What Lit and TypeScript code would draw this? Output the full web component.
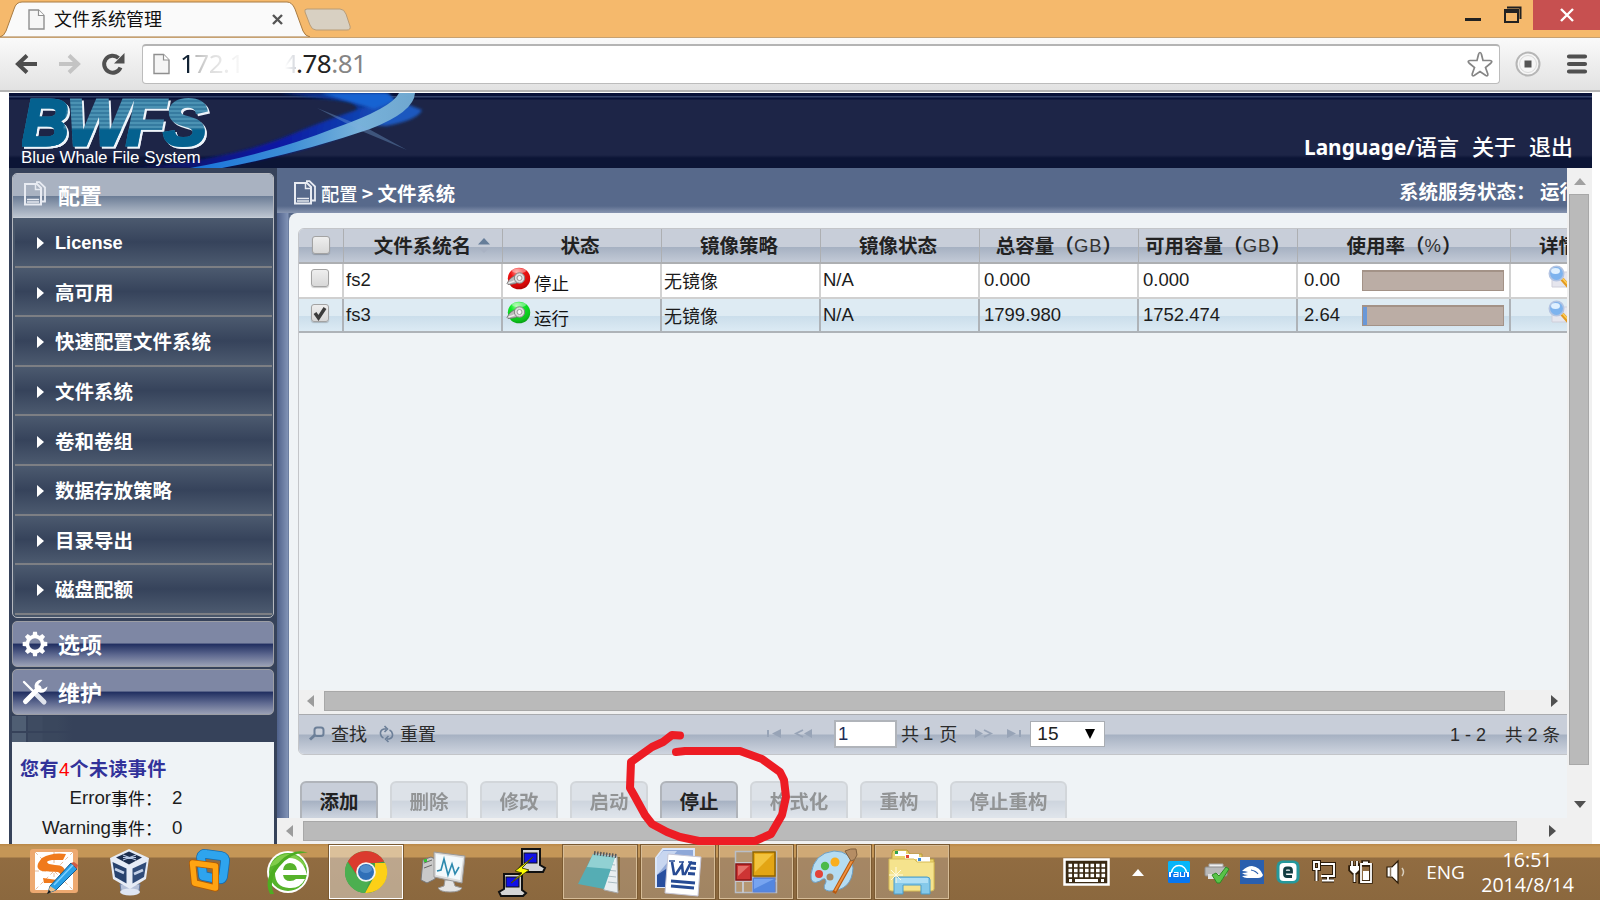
import { LitElement, html, svg, css } from "lit";
import { customElement } from "lit/decorators.js";
import { classMap } from "lit/directives/class-map.js";

interface FsRow {
  name: string;
  running: boolean;
  total: string;
  free: string;
  used: number;
}

const NAV = ["License", "高可用", "快速配置文件系统", "文件系统", "卷和卷组", "数据存放策略", "目录导出", "磁盘配额"];

const ROWS: FsRow[] = [
  { name: "fs2", running: false, total: "0.000", free: "0.000", used: 0 },
  { name: "fs3", running: true, total: "1799.980", free: "1752.474", used: 2.64 },
];

const ACTIONS = [
  { label: "添加", on: true, wide: "" },
  { label: "删除", on: false, wide: "" },
  { label: "修改", on: false, wide: "" },
  { label: "启动", on: false, wide: "" },
  { label: "停止", on: true, wide: "" },
  { label: "格式化", on: false, wide: "w3" },
  { label: "重构", on: false, wide: "" },
  { label: "停止重构", on: false, wide: "w4" },
];

const pageIcon = (w: number, h: number) => html`<svg width=${w} height=${h} viewBox="0 0 17 21">
  <path d="M1 1h9.500l5.500 5.500v13.500h-15z" fill="#f5f5f5" stroke="#8f8f8f" stroke-width="1.400" />
  <path d="M10.500 1v5.500h5.500" fill="#fff" stroke="#8f8f8f" stroke-width="1.200" />
</svg>`;

const docsIcon = html`<svg width="24" height="26" viewBox="0 0 24 26" fill="none" stroke="#e8ebf2" stroke-width="2">
  <path d="M2 3h12l4 4v16.500H2z" /><path d="M12.500 3v5.500h5.500" stroke-width="1.500" />
  <path d="M13 1.200h3.500l5.500 5.300v14h-3" stroke-width="1.800" />
  <path d="M4 18.500h12M4 21h12" stroke-width="1.300" />
</svg>`;

const gearIcon = html`<svg width="26" height="26" viewBox="-13 -13 26 26">
  <circle r="7.600" fill="none" stroke="#fff" stroke-width="3.600" />
  ${[0, 45, 90, 135, 180, 225, 270, 315].map((a) => svg`<path d="M-2.600-8L-1.900-12.300h3.800L2.600-8z" fill="#fff" transform="rotate(${a})" />`)}
</svg>`;

const toolsIcon = html`<svg width="26" height="26" viewBox="0 0 26 26">
  <path d="M2 3l10 10" stroke="#fff" stroke-width="2.400" stroke-linecap="round" />
  <path d="M14 15l8 8" stroke="#dfe3ec" stroke-width="5" stroke-linecap="round" />
  <path d="M3.500 22.500L17 9" stroke="#fff" stroke-width="5" stroke-linecap="round" />
  <path d="M20.500 1a6.500 6.500 0 1 0 5 6.500l-4 2.500-4.500-1-.5-4z" fill="#fff" />
</svg>`;

const statusIcon = (on: boolean) => {
  const id = on ? "ball-run" : "ball-stop";
  return html`<svg width="25" height="24" viewBox="0 0 25 24">
  <defs><radialGradient id=${id} cx=".4" cy=".2" r=".95">
    <stop offset="0" stop-color=${on ? "#8dff88" : "#ff8a84"} />
    <stop offset=".3" stop-color=${on ? "#0ee828" : "#f01414"} />
    <stop offset=".7" stop-color=${on ? "#0bc41c" : "#d40808"} />
    <stop offset="1" stop-color=${on ? "#067c0c" : "#8c0000"} />
  </radialGradient></defs>
  <ellipse cx="13" cy="11.500" rx="11.200" ry="10.800" fill="url(#${id})" />
  <ellipse cx="13" cy="3.800" rx="7" ry="2.500" fill="#fff" opacity=".4" />
  <path d="M1 16.500Q4 10 10 8.500L14 14Q10 17.500 2 17.500z" fill="#bbb" stroke="#6f6f6f" stroke-width=".8" />
  <path d="M2.500 16Q7 15.500 11 12" stroke="#eee" stroke-width="1.500" fill="none" />
  <circle cx="13.500" cy="11" r="5.200" fill="#dedede" stroke="#858585" />
  <circle cx="13.500" cy="11" r="2.500" fill="#f8f8f8" stroke="#999" />
</svg>`;
};

const lensIcon = html`<svg width="24" height="24" viewBox="0 0 24 24">
  <path d="M4 7h16v15H4z" fill="#e6e6ee" stroke="#cfcfda" />
  <path d="M14 14l8 9" stroke="#e39a1f" stroke-width="4" /><path d="M14.500 13.500l7 7.500" stroke="#ffd15c" stroke-width="1.500" />
  <circle cx="8.500" cy="8.500" r="7.200" fill="#7db3ee" stroke="#b3c4e2" stroke-width="1.600" />
  <ellipse cx="7.500" cy="6" rx="4.500" ry="3" fill="#dff0ff" />
</svg>`;

const triangle = (dir: "left" | "right" | "up" | "down", fill: string) => {
  const d = { left: "M7 0v12L0 6z", right: "M0 0v12L7 6z", up: "M0 7h12L6 0z", down: "M0 0h12L6 7z" }[dir];
  const side = dir === "left" || dir === "right";
  return html`<svg width=${side ? 7 : 12} height=${side ? 12 : 7}><path d=${d} fill=${fill} /></svg>`;
};

const LAUNCHERS = [
  {
    cls: "", icon: html`<svg width="48" height="48" viewBox="0 0 48 48">
      <rect x="0" y="1" width="48" height="44" rx="3" fill="#eda970" /><rect x="5" y="4" width="38" height="38" fill="#fff" />
      <path d="M5 4l38 38M43 4L5 42M24 4v38M5 23h38" stroke="#e8bd9c" stroke-width="1" stroke-dasharray="4 3" />
      <path d="M36 6Q22 4 12 10Q3 20 12 23L28 24Q33 26 27 32L13 30l1 5Q34 36 35 26Q36 17 25 17L19 16Q14 13 22 12L33 12z" fill="#f07a1c" />
      <path d="M20 38L41 15l6 6L26 42l-8 3z" fill="#2aa0e6" stroke="#125a8e" /><path d="M41 15l6 6 1-4-4-3z" fill="#cf5b45" />
      <path d="M24 37L43 17" stroke="#7ed0ff" stroke-width="1.500" /><path d="M20 38l6 4-8 3z" fill="#e7bf8c" /><path d="M19 42l2 2-4 2z" fill="#111" />
    </svg>` },
  {
    cls: "nudge", icon: html`<svg width="42" height="48" viewBox="0 0 42 48">
      <path d="M11 36L31 36l-1 7q-9 4-18 0z" fill="#b4c0d8" stroke="#65799e" /><ellipse cx="21" cy="44" rx="10" ry="3.500" fill="#dfe6f2" />
      <path d="M1 10L20 1l20 9-3 21-16 10L4 31z" fill="#e6ecf6" />
      <path d="M7 9.500l13-6 13 6-13 7z" fill="#1c2e4e" /><path d="M3.500 14l14 6.500v15L6 29z" fill="#27426e" /><path d="M37.500 14l-14 6.500v15L35 29z" fill="#304c79" />
      <path d="M14 7l13 5M27 7l-13 5M14 9.500h13" stroke="#b9c9e4" stroke-width="1.200" />
      <path d="M6 21l9 4M25 26l9-4" stroke="#c3d1e8" stroke-width="2.500" />
    </svg>` },
  {
    cls: "", icon: html`<svg width="44" height="48" viewBox="0 0 44 48" fill="none" stroke-linejoin="round">
      <path d="M13 9q1-4 5-3l15 2q5 1 4 6l-2 15q-1 3-5 2l-15-3z" stroke="#146bb0" stroke-width="9.500" /><path d="M13 9q1-4 5-3l15 2q5 1 4 6l-2 15q-1 3-5 2l-15-3z" stroke="#2ea4ee" stroke-width="8" />
      <path d="M4.500 15l23 3v22L6.500 35z" stroke="#b25a02" stroke-width="7" /><path d="M4.500 15l23 3v22L6.500 35z" stroke="#ffa412" stroke-width="5.500" />
    </svg>` },
  {
    cls: "", icon: html`<svg width="44" height="48" viewBox="0 0 44 48">
      <circle cx="22" cy="24" r="21" fill="#fff" /><circle cx="22" cy="24" r="19" fill="#57b32b" />
      <path d="M4 19a19 19 0 0 1 36 0q-17-9-36 0z" fill="#93d858" opacity=".7" />
      <path d="M41 27H17q1 6 7 6 4 0 6-2h9q-5 10-16 9-14-1-14-15Q10 11 23 10 37 10 41 27zM17 22h14q-1-7-7-7t-7 7z" fill="#fff" />
      <path d="M4 46Q-4 30 14 13 29-1 42 5 26 3 13 19 2 33 8 46z" fill="#4dad22" />
    </svg>` },
  {
    cls: "open active", icon: html`<svg width="44" height="44" viewBox="-22 -22 44 44">
      <circle r="21" fill="#43a047" /><path d="M-18.200-10.500A21 21 0 0 1 18.200-10.500L9-9H0L-9 3z" fill="#db3a2e" />
      <path d="M19.200-9A21 21 0 0 1-1 21L8.500 4 9-9z" fill="#fdd017" /><path d="M-18.500-10L-8 6 3 10-1 21A21 21 0 0 1-18.500-10z" fill="#4caf50" />
      <circle r="9.800" fill="#f4f4f4" /><circle r="8" fill="#2f6fb7" /><ellipse cy="-3" rx="6" ry="4" fill="#6ba1da" opacity=".6" />
    </svg>` },
  {
    cls: "", icon: html`<svg width="46" height="44" viewBox="0 0 46 44">
      <path d="M2 10l8-3 4 2v20l-8 4-6-3z" fill="#c9c9c9" stroke="#777" /><path d="M3 13l8-3M3 18l8-3" stroke="#666" />
      <rect x="3" y="9" width="3" height="3" fill="#35c435" />
      <path d="M24 30h8l2 6 7 2q-2 4-12 4t-12-4l6-2z" fill="#e4e4e4" stroke="#999" />
      <path d="M13 2l31 4-3 27-28-6z" fill="#dcdcdc" stroke="#999" /><path d="M15 4l27 4-3 22-24-5z" fill="#f3f9fc" />
      <path d="M16 21l4-1 3-11 4 16 4-11 3 10 4-7" fill="none" stroke="#2c89ae" stroke-width="1.600" />
    </svg>` },
  {
    cls: "", icon: html`<svg width="50" height="50" viewBox="0 0 50 50">
      <path d="M25 2h18v16l5 3-2 4H25l-3-3 3-4z" fill="#d6d6d6" stroke="#111" stroke-width="2" /><rect x="27" y="6" width="13" height="10" fill="#1111e6" stroke="#111" />
      <path d="M7 27h18v16l4 3-3 3H4l-2-4 5-3z" fill="#d6d6d6" stroke="#111" stroke-width="2" /><rect x="9" y="30" width="13" height="10" fill="#1111e6" stroke="#111" />
      <path d="M36 10L18 24l7 2L14 36 32 23l-7-2z" fill="#ffff00" stroke="#4b4b00" />
    </svg>` },
  {
    cls: "open", icon: html`<svg width="46" height="46" viewBox="0 0 46 46">
      <path d="M38 8h5v33l-5 3z" fill="#83683a" /><path d="M17 4l23 3 1 37-14-3z" fill="#e8eef0" stroke="#a8a8a8" />
      <path d="M29 15l9 1M29 21l10 1M30 27l9 1M31 33l9 1" stroke="#aabcc2" />
      <path d="M16 5l22 3-11 32-26-5z" fill="#55adb4" /><path d="M16 5l22 3-4 12-24-2z" fill="#a0dadb" opacity=".8" />
      <path d="M17 4l23 3" stroke="#555" stroke-width="4" stroke-dasharray="1.500 1.500" />
    </svg>` },
  {
    cls: "open", icon: html`<svg width="48" height="48" viewBox="0 0 48 48">
      <path d="M9 1h31v32l-6 6H2V10z" fill="#8fa8d8" stroke="#dbe6f8" stroke-width="2" /><path d="M9 3h14L3 27V10z" fill="#c8d6f0" /><path d="M3 39V27l12-8v20z" fill="#284f9f" />
      <path d="M14 6l33 3-3 39-33-3z" fill="#fff" stroke="#c6c6d6" />
      <path d="M18 14l2 12h2l6-9 1 9h2l6-12" fill="none" stroke="#274b94" stroke-width="2.600" />
      <path d="M15 13h6M25 14h5M34 14h4" stroke="#274b94" stroke-width="1.500" />
      <path d="M37 15l5 .5M36 20l6 .5M34 25.500l7 .5M17 33l24 2M17 38l23 2" stroke="#274b94" stroke-width="3" />
    </svg>` },
  {
    cls: "open", icon: html`<svg width="42" height="42" viewBox="0 0 42 42">
      <rect x=".5" y=".5" width="41" height="41" fill="#b59873" stroke="#b9bec8" stroke-width="1.500" />
      <path d="M0 12h18M0 30h42M18 0v42M8 30v12" stroke="#c7c7ca" stroke-width="2" />
      <rect x="18" y="1" width="22" height="24" fill="#e3a514" stroke="#8f6400" stroke-width="1.500" /><path d="M20 3h18L20 21z" fill="#f8d04f" opacity=".7" />
      <rect x="1" y="13" width="15" height="16" fill="#cd3434" stroke="#871414" stroke-width="1.500" /><path d="M3 15h11L3 25z" fill="#ee8a80" opacity=".7" />
      <rect x="18" y="27" width="22" height="14" fill="#5487e0" stroke="#5d7fd0" /><path d="M19 28h20L19 38z" fill="#8fb8fa" opacity=".6" />
    </svg>` },
  {
    cls: "open", icon: html`<svg width="48" height="48" viewBox="0 0 48 48">
      <path d="M24 3Q42 3 43 20 42 43 19 43 11 42 16 34 16 28 10 33 0 38 1 26 4 5 24 3z" fill="#b5dcf2" stroke="#6d9fc4" /><circle cx="20" cy="29" r="3.500" fill="#a58661" />
      <circle cx="9" cy="26" r="4" fill="#e24339" /><circle cx="15" cy="18" r="4.200" fill="#4cba49" /><circle cx="25" cy="14" r="4.500" fill="#f9ae1d" />
      <path d="M43 11L24 45" stroke="#b8590e" stroke-width="4" /><path d="M43 11L25 43" stroke="#ee9141" stroke-width="1.800" />
      <path d="M35 3Q41 0 46 1l1 6q-2 6-6 6z" fill="#b58d64" stroke="#80603f" />
    </svg>` },
  {
    cls: "open", icon: html`<svg width="50" height="50" viewBox="0 0 50 50">
      <path d="M5 6q0-3 3-3h12l3 4 12 0v5h12v30H4z" fill="#ead26b" stroke="#b79a38" />
      <path d="M8 4h11v5H8zM18 7h14v5H18zM30 10h13v5H30z" fill="#fff" /><path d="M8 4h3v3H8z" fill="#31a14c" /><path d="M19 8h3v3h-3z" fill="#e24632" /><path d="M31 11h3v3h-3z" fill="#3b8bd6" />
      <path d="M2 12h25l3 3h17v27q0 2-3 2H5q-3 0-3-2z" fill="#f5e38d" stroke="#d7bc57" />
      <path d="M7 32q0-2 2-2h31q3 0 3 3v14h-9v-9H16v9H7z" fill="#85c9ea" stroke="#4d9dc8" /><path d="M9 31h32v5H9z" fill="#b9e5f7" opacity=".8" />
      <path d="M9 20v16M2 28h14M4 23l10 10M14 23L4 33" stroke="#fffbe0" stroke-width="1" />
    </svg>` },
];

const OUT = "#2b1b08";
const TRAY = [
  html`<svg width="22" height="22" viewBox="0 0 22 22"><rect width="22" height="22" rx="1.500" fill="#0877f0" /><rect width="22" height="11" rx="1.500" fill="#08c4fb" opacity=".8" />
    <path d="M3.500 12a7.500 7.500 0 0 1 15 0" fill="none" stroke="#fff" stroke-width="1.400" /><path d="M2 11v5M20 11v5" stroke="#fff" stroke-width="2" />
    <path d="M6 11.500h4v4H6v-2h4M12.500 11v4.500h4V11" fill="none" stroke="#fff" stroke-width="1.200" /></svg>`,
  html`<svg width="26" height="22" viewBox="0 0 26 22"><path d="M6 3h14v6H6z" fill="#eee" stroke="#aaa" /><rect x="2" y="6" width="22" height="9" rx="1" fill="#b9b9b9" stroke="#8b8b8b" /><path d="M5 13h15v5H5z" fill="#e0e0e0" />
    <path d="M9 14l4-2 3 3 7-9 3 2-9 14h-3z" fill="#59c348" stroke="#2d8a24" /></svg>`,
  html`<svg width="24" height="24" viewBox="0 0 24 24"><rect width="24" height="24" fill="#2a5fae" /><path d="M2 11q5-5 10-5 8 1 11 9-1 3-5 3H7q-3 0-5-2 3 0 6-1-4 0-6-2 4 0 6-1-3-1-6-1z" fill="#fff" /><path d="M11 10q5 1 7 4" stroke="#2a5fae" stroke-width="1.200" fill="none" /></svg>`,
  html`<svg width="24" height="24" viewBox="0 0 24 24"><rect x=".5" y=".5" width="23" height="23" rx="6" fill="#25989b" /><rect x="3.500" y="3" width="17" height="18" rx="4" fill="#fff" />
    <path d="M16 16.500h-5q-2.500 0-2.500-2.500v-3.500q0-2.500 2.500-2.500h2q2.500 0 2.500 2.500v1.700h-6" fill="none" stroke="#133d42" stroke-width="2.800" /></svg>`,
  html`<svg width="24" height="24" viewBox="0 0 24 24" fill="none"><path d="M9 4h13v12H10M16 16v4M10 20.500h12M2 2h5v7H2zM4.500 9v12" stroke=${OUT} stroke-width="4" /><path d="M9 4h13v12H9M16 16v4M10 20.500h12M2 2h5v7H2zM4.500 9v12" stroke="#fff" stroke-width="1.900" /></svg>`,
  html`<svg width="24" height="24" viewBox="0 0 24 24" fill="none"><path d="M11 5h11v17H11zM14 2h5v3h-5zM3 1v5M8 1v5M1 7h9v3l-3 3H4L1 10zM5.500 14v9" stroke=${OUT} stroke-width="3.500" />
    <path d="M1 6h9v4l-3 3H4l-3-3z" fill="#fff" /><path d="M3 1v5M8 1v5M5.500 13v9M12 4h10v18H12zM14 2.500h5" stroke="#fff" stroke-width="1.800" /><path d="M14 11h6v9h-6z" fill="#fff" /></svg>`,
  html`<svg width="24" height="24" viewBox="0 0 24 24"><path d="M2 7h5l6-6v22l-6-6H2z" fill="#fff" stroke=${OUT} stroke-width="1.200" /><path d="M5.500 7v10" stroke="#8a7a66" stroke-width="1.500" /><path d="M17 8q3 4 0 8" fill="none" stroke="#d8cdbb" stroke-width="1.500" /></svg>`,
];

@customElement("app-root")
export class AppRoot extends LitElement {
  static styles = css`
    :host { display: flex; flex-direction: column; position: relative; width: 1600px; height: 900px; overflow: hidden; background: #fff;
      font: 18.5px/20px "Liberation Sans", "Noto Sans CJK SC", sans-serif; color: #1c1c1c; }
    * { box-sizing: border-box; }
    svg { display: block; flex: none; overflow: visible; }
    .tabs { display: flex; height: 37px; background: #f5b96c; align-items: flex-start; flex: none; }
    .tab { display: grid; width: 310px; height: 37px; flex: none; }
    .tab > * { grid-area: 1 / 1; }
    .tabrow { display: flex; align-items: center; padding: 2px 0 0 28px; height: 37px; }
    .tabtitle { font-size: 18px; margin-left: 9px; width: 218px; color: #111; white-space: nowrap; }
    .newtab { margin-top: 8px; margin-left: -6px; }
    .winbtns { display: flex; margin-left: auto; height: 30px; align-items: center; }
    .min { width: 16px; height: 3px; background: #222; margin: 9px 23px 0 0; }
    .close { width: 67px; height: 30px; background: #c75050; display: flex; align-items: center; justify-content: center; margin-left: 11px; }
    .bar { display: flex; align-items: center; height: 55px; flex: none; background: linear-gradient(#fafafa, #e2e2e2); border-top: 1px solid #c7a170; border-bottom: 2px solid #b4b4b4; padding: 0 0 1px 15px; }
    .nav { display: flex; gap: 20px; width: 127px; align-items: center; }
    .url { display: flex; align-items: center; width: 1358px; height: 40px; background: #fff; border: 1px solid #bcbcbc; border-top: 2px solid #b4b4b4; border-radius: 4px; padding: 0 6px 0 10px; font: 26px/36px "Noto Sans", sans-serif; flex: none; }
    .addr { margin: -3px 0 0 10px; display: flex; flex: 1; letter-spacing: -.5px; white-space: pre; }
    .a1 { background: linear-gradient(90deg, #123 0, #123 11px, #bbb 15px, #ddd 30px, #f7f7f7 60px); -webkit-background-clip: text; color: transparent; width: 103px; }
    .a2 { color: transparent; background: linear-gradient(90deg, #fff 2px, #cfd2d8 14px); -webkit-background-clip: text; width: 13px; }
    .a3 { color: #222; } .a4 { color: #858585; }
    .ext { margin: 0 26px 0 15px; }
    .page { margin: 1px 8px 0 9px; height: 751px; flex: none; display: flex; flex-direction: column; }
    .banner { display: grid; height: 75px; flex: none; background: linear-gradient(#081138 0 3px, #34436b 3px 4px, #081138 5px 6px, #1d2547 7px 62px, #0c1536 65px); overflow: hidden; }
    .banner > * { grid-area: 1 / 1; }
    .swoosh { justify-self: start; }
    .brand { display: flex; flex-direction: column; padding: 1px 0 0 13px; }
    .bwfs { font: italic 900 65px/58px "Liberation Sans", sans-serif; letter-spacing: -2.200px; height: 55px; width: 215px; color: transparent; padding-left: 0;
      background: linear-gradient(100deg, #04618f 46px, transparent 48px), linear-gradient(transparent 34px, #04618f 36px), repeating-linear-gradient(#4b92b3 0 2px, #367ba0 2px 4px);
      -webkit-background-clip: text; -webkit-text-stroke: 3px transparent; filter: drop-shadow(2px 2px 0 #eef4fa); }
    .tagline { font-size: 17px; line-height: 18px; color: #fff; white-space: nowrap; margin-left: -1px; letter-spacing: -.04px; }
    .links { justify-self: end; align-self: end; display: flex; gap: 13px; padding: 0 19px 7px 0; font: 700 20.800px/28px "Noto Sans", "Noto Sans CJK SC", sans-serif; color: #fff; white-space: nowrap; }
    .links .cj { font: 500 22px/28px "Noto Sans CJK SC", sans-serif; }
    .body { display: flex; height: 676px; }
    .side { width: 268px; flex: none; background: #36425a; padding: 5px 3px 0 3px; display: flex; flex-direction: column; }
    .group { border: 1px solid #b4b7be; border-radius: 5px; height: 445px; padding: 0 1px 0 2px; background: #48566a; display: flex; flex-direction: column; margin-bottom: 3px; }
    .ghead { display: flex; align-items: center; gap: 10px; height: 46px; padding: 0 0 3px 9px; font: 700 22px/36px "Noto Sans CJK SC", sans-serif; color: #fff; border: 1px solid #9c9ea5; border-radius: 5px; margin-bottom: 2px; flex: none;
      background: linear-gradient(#7e87a4 0 48%, #202e60 50%, #5e6990 75%, #9aa0b5); }
    .ghead svg { margin-top: 2px; }
    .ghead.sel svg { margin-top: 0; }
    .ghead.sel { gap: 11px; height: 44px; padding: 0 0 3px 10px; border: 0; border-bottom: 1px solid #c6ccd6; margin: 0 -1px 0 -2px; border-radius: 4px 4px 0 0; background: linear-gradient(#a9b2c1 0 50%, #6c7d96 52%, #98a4b6 78%, #bcc4d0); }
    .item { display: flex; align-items: center; gap: 11px; height: 49.600px; flex: none; padding: 3px 0 0 22px; border-bottom: 2px solid #7d7f84; font: 700 19.500px/24px "Liberation Sans", "Noto Sans CJK SC", sans-serif; color: #fff;
      background: linear-gradient(#4c5a6f, #36435b 50%, #4c5a6f); }
    .item span { white-space: nowrap; }
    .item .lat { font-size: 18.200px; }
    .gap { height: 26px; flex: none; margin-top: -1px;
      background: linear-gradient(#36425a, #36425a) 14px 0 / 2px 26px no-repeat, linear-gradient(#36425a, #36425a) 0 15px / 60px 2px no-repeat, linear-gradient(90deg, #4f5e73 0 14px, #3e4b61 14px 30px, #3a475d 31px 45px, #36425a 60px); }
    .events { flex: 1; background: #eff3f6; padding: 16px 0 0 8px; white-space: nowrap; }
    .evt { font: 700 19px/24px "Liberation Sans", "Noto Sans CJK SC", sans-serif; color: #32329a; letter-spacing: .45px; }
    .evt b { color: #f00; font-weight: 400; letter-spacing: 0; }
    .er { display: flex; height: 30px; line-height: 30px; font-size: 18.700px; margin-top: 1px; margin-bottom: -1px; }
    .er span { width: 142px; display: flex; justify-content: flex-end; margin-right: 10px; letter-spacing: 0; }
    .er i { font: 17px/30px "Noto Sans CJK SC", sans-serif; color: #111; letter-spacing: 0; }
    .main { flex: 1; min-width: 0; display: grid; grid-template: 650px 26px / 1290px 25px; }
    .view { background: linear-gradient(90deg, #4f618a, #8193b6 11px, #566889 12px); overflow: hidden; display: flex; flex-direction: column; padding-left: 12px; }
    .crumb { height: 45px; margin-left: -12px; padding: 0 0 0 16px; background: linear-gradient(#57698b 38px, #8795b0 45px); display: flex; align-items: center; color: #fff; font: 500 18.300px/30px "Noto Sans CJK SC", sans-serif; flex: none; white-space: pre; overflow: hidden; }
    .crumb b { font-size: 19.400px; }
    .crumb svg { margin: 5px 4px 0 0; }
    .crumb span { padding-top: 5px; }
    .crumb .svc { margin-left: auto; margin-right: -12px; padding-top: 0; font-weight: 700; font-size: 19.500px; letter-spacing: 0; }
    .sheet { flex: 1; background: #eff3f6; border-radius: 8px 0 0 0; padding: 15px 0 0 9px; min-height: 0; overflow: hidden; }
    .grid { width: 1290px; border: 1px solid #c3c5c9; border-radius: 6px; height: 527px; display: flex; flex-direction: column; overflow: hidden; }
    .tr { display: grid; grid-template-columns: 45px 159px 159px 159px 159px 159px 159px 213px 90px; height: 34.500px; flex: none; background: #fff; }
    .tr > div { border-right: 2px solid #d2d2d2; border-bottom: 2px solid #d0d0d0; display: flex; align-items: center; padding-left: 2px; white-space: nowrap; overflow: hidden; }
    .tr > .num { padding-left: 4px; }
    .tr.sel { background: linear-gradient(#deebf3 50%, #cbdeeb 51%, #deecf5); }
    .tr.sel > div { border-color: #aeb3b8; padding-top: 1px; }
    .tr.sel > .cj, .tr.sel > .state { padding-top: 0; }
    .tr.th { height: 35px; background: linear-gradient(#c8ced9 50%, #a6b1c2 52%, #c6cdd9); font: 700 19.500px/30px "Liberation Sans", "Noto Sans CJK SC", sans-serif; color: #222; }
    .tr.th > div { border-color: #adafb2; justify-content: center; padding: 0 4px 0 0; border-right-width: 1px; }
    .tr.th > .first { padding: 0 0 0 18px; }
    .tr.th > .par { padding: 0; }
    .tr.th .g { font-weight: 400; letter-spacing: 1px; color: #333; font-size: 18.500px; }
    .tr > .c0 { justify-content: center; padding: 0 1px 5px 0; }
    .tr.th > .c0 { padding: 0 0 2px 0; }
    .tr.th > .last { justify-content: flex-start; padding-left: 28px; }
    .sort { margin: 1px 0 0 7px; }
    .cb { width: 18px; height: 18px; border: 1px solid #a3a3a3; border-radius: 3px; background: linear-gradient(#eee, #d8d8d8); box-shadow: 0 1px 1px #0003; display: flex; }
    .cj { font-family: "Noto Sans CJK SC", sans-serif; font-size: 18px; }
    .st { margin-left: 3px; padding-top: 6px; font-size: 17.500px; color: #111; }
    .state svg { margin: -3px 0 0 1px; }
    .pct { width: 62px; padding-left: 4px; }
    .meter { width: 142px; height: 21px; background: #bbada5; border: 1px solid #a39287; border-top-width: 2px; }
    .fill { height: 100%; background: #6998d8; }
    .lens { margin: -6px 0 0 35px; }
    .space { flex: 1; }
    .hs { display: flex; align-items: center; background: #f0f0f0; height: 24px; flex: none; padding: 0 0 2px 8px; }
    .thumb { background: #bababa; border: 1px solid #a8a8a8; height: 20px; }
    .hs .in { width: 1181px; margin: 0 46px 0 10px; }
    .foot { display: flex; align-items: center; height: 40px; flex: none; border-top: 1px solid #a9abaf; background: linear-gradient(#c8ced9 49%, #a6b1c2 51%, #ced4df); padding: 0 0 2px 10px; color: #2b2b2b; white-space: pre; }
    .foot .cj { margin: 0 0 2px 6px; }
    .foot .ic2 { margin-left: 12px; }
    .pager { display: flex; align-items: center; margin-left: 331px; }
    .pager svg.next { margin-left: 18px; }
    .foot .pager .pg { margin-left: 4px; }
    .box { width: 63px; height: 28px; margin-left: 22px; background: #fff; border: 2px solid #b0b4ba; padding: 1px 2px; color: #1d2c58; line-height: 22px; }
    .sel2 { width: 75px; height: 26px; background: #fff; border: 1px solid #a9adb3; margin-left: 9px; display: flex; align-items: center; justify-content: space-between; padding: 1px 9px 0 6px; font-size: 19px; color: #222; }
    .count { margin-left: auto; margin-right: 27px; font-size: 18px; padding-top: 1px; }
    .count .c { font-family: "Noto Sans CJK SC", sans-serif; font-size: 17.500px; }
    .btns { display: flex; gap: 12px; padding: 26px 0 0 2px; }
    .btn { width: 78px; height: 44px; border: 2px solid #b0b4ba; border-radius: 6px 6px 0 0; background: linear-gradient(#c8ced9 43%, #a6b1c2 45%, #ccd3de 85%); text-align: center; font: 700 19.500px/36px "Noto Sans CJK SC", sans-serif; color: #222; flex: none; }
    .btn.off { opacity: .45; }
    .btn.w3 { width: 98px; } .btn.w4 { width: 117px; }
    .vs { background: #f0f0f0; display: flex; flex-direction: column; align-items: center; padding-top: 10px; grid-row: 1 / 3; grid-column: 2; }
    .vs .thumb { width: 20px; height: 571px; margin: 9px 1px 36px 0; }
    .hs.outer { height: 26px; padding: 0 0 0 9px; }
    .hs.outer .in { width: 1214px; margin: -1px 32px 0 10px; }
    .task { display: flex; flex: 1; background: linear-gradient(#b98746, #c49657 3px 13px, #916c41 14px, #8b683e); padding-left: 15px; align-items: center; }
    .app { width: 76px; height: 54px; margin: 0 1px; display: flex; align-items: center; justify-content: center; flex: none; }
    .app.nudge { padding-right: 5px; }
    .app.open { border: 1px solid #d6bc97; outline: 1px solid #7b5a31; background: #ffffff30; outline-offset: 0; width: 74px; margin: 0 2px; }
    .app.active { background: #ffffff66; border: 1px solid #fff; }
    .tray { display: flex; align-items: center; margin-left: auto; color: #fff; padding-top: 0; }
    .kb { margin-right: 22px; }
    .up { margin-right: 17px; }
    .ti { width: 36.300px; display: flex; justify-content: center; }
    .lang { font: 19px/24px "Open Sans", "Noto Sans", sans-serif; margin-left: 11px; width: 55px; }
    .clock { font: 19.600px/25px "Open Sans", "Noto Sans", sans-serif; text-align: center; margin-right: 26px; padding-top: 0; }
    .ring { position: absolute; left: 0; top: 0; pointer-events: none; }
  `;

  private header() {
    return html`<div class="tr th">
      <div class="c0"><i class="cb"></i></div>
      <div class="first">文件系统名<svg class="sort" width="12" height="16" viewBox="0 0 12 16"><path d="M0 6.500L6 0l6 6.500z" fill="#667d99" /><path d="M0 9.500h12L6 15z" fill="#a9b2c3" /></svg></div>
      <div>状态</div><div>镜像策略</div><div>镜像状态</div>
      <div class="par">总容量（<span class="g">GB</span>）</div><div class="par">可用容量（<span class="g">GB</span>）</div>
      <div class="par">使用率（<span class="g">%</span>）</div><div class="last">详情</div>
    </div>`;
  }

  private row(r: FsRow) {
    return html`<div class=${classMap({ tr: true, sel: r.running })}>
      <div class="c0"><i class="cb">${r.running ? html`<svg width="16" height="16"><path d="M3 8l3.500 5L13 3" fill="none" stroke="#3c3c3c" stroke-width="3.400" /></svg>` : ""}</i></div>
      <div>${r.name}</div>
      <div class="state">${statusIcon(r.running)}<span class="cj st">${r.running ? "运行" : "停止"}</span></div>
      <div class="cj">无镜像</div><div>N/A</div><div class="num">${r.total}</div><div class="num">${r.free}</div>
      <div><span class="pct">${r.used.toFixed(2)}</span><div class="meter"><div class="fill" style="width:${r.used}%"></div></div></div>
      <div><span class="lens">${lensIcon}</span></div>
    </div>`;
  }

  render() {
    const pale = "#98a4b7";
    return html`
      <div class="tabs">
        <div class="tab">
          <svg width="310" height="37"><path d="M0 37Q4 36 6 31L14 9Q16 2 22 2H287Q292 2 295 9L303 31Q305 36 310 37z" fill="#fafafa" stroke="#a87b43" stroke-width="1" /></svg>
          <div class="tabrow">${pageIcon(17, 21)}<span class="tabtitle">文件系统管理</span>
            <svg width="11" height="11"><path d="M1 1l9 9M10 1l-9 9" stroke="#555" stroke-width="2.400" /></svg></div>
        </div>
        <svg class="newtab" width="48" height="23"><path d="M3 1H36Q40 1 42 6L46 18Q47 22 43 22H12Q8 22 6 17L1 4Q0 1 3 1z" fill="#d8d0c2" stroke="#b99c76" /></svg>
        <div class="winbtns"><div class="min"></div>
          <svg width="18" height="18" fill="none" stroke="#222"><path d="M3 1.500h13.500V13" stroke-width="2" /><path d="M1 6v10h13V4H1z" stroke-width="2" /><path d="M0 5h15" stroke-width="4" /></svg>
          <div class="close"><svg width="14" height="12"><path d="M1 0l12 12M13 0L1 12" stroke="#fff" stroke-width="2.400" /></svg></div>
        </div>
      </div>
      <div class="bar">
        <div class="nav">
          <svg width="23" height="20" fill="none" stroke="#4d4d4d" stroke-width="4"><path d="M22 10H3M12 1.500L3 10l9 8.500" /></svg>
          <svg width="23" height="20" fill="none" stroke="#c4c4c4" stroke-width="4"><path d="M1 10h19M11 1.500L20 10l-9 8.500" /></svg>
          <svg width="24" height="24" viewBox="0 0 24 24"><path d="M19.500 15.500A8.500 8.500 0 1 1 17.500 6" fill="none" stroke="#505050" stroke-width="4" /><path d="M23.500 1v10.500H13z" fill="#505050" /></svg>
        </div>
        <div class="url">${pageIcon(17, 22)}
          <div class="addr"><span class="a1">172.1</span><span class="a2">4</span><span class="a3">.78</span><span class="a4">:81</span></div>
          <svg width="26" height="26" viewBox="0 0 26 26"><path d="M13 1.500q1 0 1.500 2L16 9.500h7q3 .5 1 2.500l-5.500 4.500 2.300 6.500q.3 2.500-2 1.500L13 20.500l-5.800 4q-2.300 1-2-1.500L7.500 16.500 2 12q-2-2 1-2.500h7l1.500-6q.5-2 1.500-2z" fill="#fff" stroke="#858585" stroke-width="1.700" /></svg>
        </div>
        <svg class="ext" width="26" height="26"><circle cx="13" cy="13" r="11.500" fill="#f6f6f6" stroke="#b6b6b6" stroke-width="2" /><circle cx="13" cy="13" r="8.500" fill="none" stroke="#dadada" /><rect x="9.500" y="9.500" width="7" height="7" fill="#555" /></svg>
        <svg width="20" height="20"><path d="M2 2.500h16M2 10h16M2 17.500h16" stroke="#505050" stroke-width="4.200" stroke-linecap="round" /></svg>
      </div>

      <div class="page">
        <div class="banner">
          <svg class="swoosh" width="430" height="75" viewBox="9 93 430 75">
            <defs>
              <linearGradient id="s1"><stop offset="0" stop-color="#0d1550" /><stop offset=".5" stop-color="#0b12a0" /><stop offset="1" stop-color="#1456b8" /></linearGradient>
              <linearGradient id="s2"><stop offset="0" stop-color="#1672da" /><stop offset=".45" stop-color="#3f8fd6" /><stop offset=".75" stop-color="#78b2da" /><stop offset="1" stop-color="#6fa7cf" /></linearGradient>
              <filter id="soft"><feGaussianBlur stdDeviation="1.500" /></filter>
            </defs>
            <path d="M280 93h104l20 14q2 10-30 17l-50 8Q372 112 350 102z" fill="#0c3593" filter="url(#soft)" />
            <path d="M130 168q100-8 160-33 60-25 95-33l15 5Q350 145 215 168z" fill="url(#s1)" filter="url(#soft)" />
            <path d="M320 93h68l8 8-22 8z" fill="#1463d2" filter="url(#soft)" />
            <path d="M404 103l18 7q-4 10-36 16l-28-2z" fill="#1a58bf" filter="url(#soft)" />
            <path d="M190 168Q270 154 335 128 392 108 399 93h16Q414 112 370 129 300 153 222 168z" fill="url(#s2)" />
            <path d="M317 108l50 20 40 22-48-20z" fill="#7fb0e0" opacity=".35" />
          </svg>
          <div class="brand"><div class="bwfs">BWFS</div><div class="tagline">Blue Whale File System</div></div>
          <div class="links"><span>Language/<span class="cj">语言</span></span><span class="cj">关于</span><span class="cj">退出</span></div>
        </div>
        <div class="body">
          <div class="side">
            <div class="group">
              <div class="ghead sel">${docsIcon}配置</div>
              ${NAV.map((n) => html`<div class="item">${triangle("right", "#fff")}<span class=${n === "License" ? "lat" : ""}>${n}</span></div>`)}
            </div>
            <div class="ghead">${gearIcon}选项</div>
            <div class="ghead">${toolsIcon}维护</div>
            <div class="gap"></div>
            <div class="events">
              <div class="evt">您有<b>4</b>个未读事件</div>
              <div class="er"><span>Error<i>事件：</i></span>2</div>
              <div class="er"><span>Warning<i>事件：</i></span>0</div>
            </div>
          </div>
          <div class="main">
            <div class="view">
              <div class="crumb">${docsIcon}<span>配置 <b>&gt; 文件系统</b></span><span class="svc">系统服务状态： 运行</span></div>
              <div class="sheet">
                <div class="grid">
                  ${this.header()}${ROWS.map((r) => this.row(r))}
                  <div class="space"></div>
                  <div class="hs">${triangle("left", "#9c9c9c")}<div class="thumb in"></div>${triangle("right", "#505050")}</div>
                  <div class="foot">
                    <svg width="16" height="15" fill="none" stroke="#6c7f98"><path d="M1 13.500L6 9" stroke-width="3" /><rect x="5.500" y="1.500" width="9" height="8.500" rx="2.500" stroke-width="2" /></svg><span class="cj">查找</span>
                    <svg class="ic2" width="15" height="16" fill="none" stroke="#6c7f98" stroke-width="1.600"><path d="M7 3H5Q1 4 1.500 8q.5 3 3 4M5.500 0L8.500 3 5.500 6M8 13h2q4-1 3.500-5-.5-3-3-4M9.500 10L6.500 13l3 3" /></svg><span class="cj">重置</span>
                    <div class="pager">
                      <svg width="45" height="9" viewBox="0 0 45 9"><path d="M1 1v7" stroke=${pale} stroke-width="2" /><path d="M14 0v9L5 4.500zM45 0v9L37 4.500z" fill=${pale} /><path d="M36 1l-7 3.500L36 8" fill="none" stroke=${pale} stroke-width="1.800" /></svg>
                      <div class="box">1</div><span class="cj pg">共 </span>1<span class="cj">页</span>
                      <svg class="next" width="46" height="9" viewBox="0 0 46 9"><path d="M45 1v7" stroke=${pale} stroke-width="2" /><path d="M0 0v9L8 4.500zM32 0v9l9-4.500z" fill=${pale} /><path d="M9 1l7 3.500L9 8" fill="none" stroke=${pale} stroke-width="1.800" /></svg>
                      <div class="sel2">15<svg width="10" height="10"><path d="M0 0h10L5 10z" fill="#000" /></svg></div>
                    </div>
                    <span class="count">1 - 2   <span class="c"> 共</span> 2 <span class="c">条</span></span>
                  </div>
                </div>
                <div class="btns">${ACTIONS.map((a) => html`<div class=${"btn " + a.wide + (a.on ? "" : " off")}>${a.label}</div>`)}</div>
              </div>
            </div>
            <div class="vs">${triangle("up", "#a0a0a0")}<div class="thumb"></div>${triangle("down", "#505050")}</div>
            <div class="hs outer">${triangle("left", "#9c9c9c")}<div class="thumb in"></div>${triangle("right", "#505050")}</div>
          </div>
        </div>
      </div>

      <div class="task">
        ${LAUNCHERS.map((l) => html`<div class="app ${l.cls}">${l.icon}</div>`)}
        <div class="tray">
          <svg class="kb" width="47" height="28" viewBox="0 0 47 28"><rect x="1.500" y="1.500" width="44" height="25" fill="#3a2a14" stroke="#fff" stroke-width="2.500" />
            <path d="M5.500 7.500h37M5.500 12.500h37M5.500 17.500h37" stroke="#fff" stroke-width="3.400" stroke-dasharray="3.600 1.900" /><path d="M6 22.500h3M12 22.500h23M38 22.500h3" stroke="#fff" stroke-width="3" /></svg>
          <svg class="up" width="12" height="7"><path d="M0 7h12L6 0z" fill="#fff" /></svg>
          ${TRAY.map((t) => html`<div class="ti">${t}</div>`)}
          <div class="lang">ENG</div>
          <div class="clock">16:51<br />2014/8/14</div>
        </div>
      </div>

      <svg class="ring" width="1600" height="900" fill="none" stroke="#ed1c24" stroke-width="8" stroke-linecap="round" stroke-linejoin="round">
        <path d="M680 735.500L672 735 663 742 652 747 631 762 630 788 634 795 645 815 652 824 667 832 680 837 699 841H755L771 834 782 815 786 797 784 780 780 772 762 759 740 751H685L676 752" />
      </svg>`;
  }
}
